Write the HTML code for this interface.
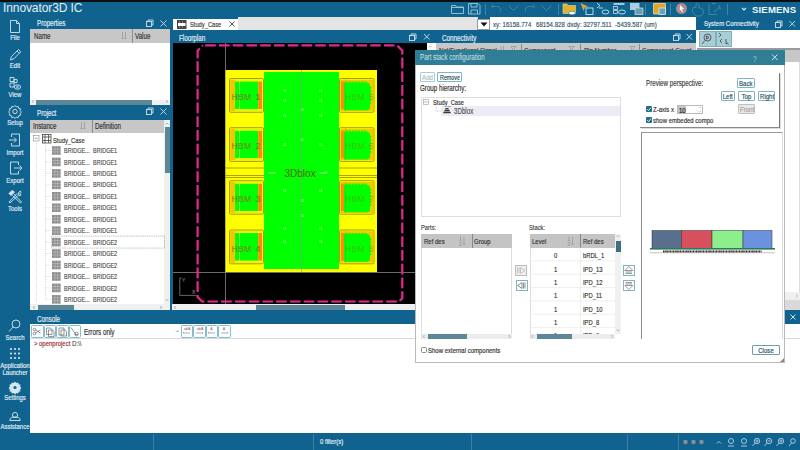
<!DOCTYPE html>
<html><head><meta charset="utf-8">
<style>
*{margin:0;padding:0;box-sizing:border-box}
html,body{width:800px;height:450px;overflow:hidden;background:#fff;font-family:"Liberation Sans",sans-serif;font-size:6px;color:#333}
.a{position:absolute}
.tl{background:#10638f}
.t{position:absolute;white-space:nowrap;line-height:1;-webkit-text-stroke:0.18px currentColor}
.w{color:#e2eef4}
.nx{-webkit-text-stroke:0 !important}
svg{position:absolute;overflow:visible}
.gh{position:absolute;background:#c7c7c7}
.btn{position:absolute;border:0.8px solid #86bccb;background:#fafdfe;border-radius:1.5px}
</style></head><body>

<!-- top bar -->
<div class="a" style="left:0;top:0;width:800px;height:2px;background:#0b0f12"></div>
<div class="a tl" style="left:0;top:1.5px;width:800px;height:15.5px"></div>
<div class="t nx" style="left:3px;top:2px;font-size:12px;color:#e4eff5;letter-spacing:-0.1px">Innovator3D IC</div>
<!-- toolbar icons -->
<svg style="left:0;top:0" width="800" height="17" viewBox="0 0 800 17">
 <g fill="none" stroke="#9cc8dc" stroke-width="0.9">
  <path d="M451.5 5.5h4l1 1.5h7v6.5h-12z M451.5 7.5h12"/>
  <path d="M468.5 3.5h9.5l2 2v8.5h-11.5z M471 3.5v3.5h6v-3.5 M471 14v-4h6.5v4"/>
 </g>
 <g fill="none" stroke="#4d87a3" stroke-width="0.9">
  <path d="M485.5 4v11 M558.5 4v11 M645.5 4v11 M670.5 4v11 M727.5 4v11"/>
  <path d="M500 12.5c1.5-3 0-6-3.5-6h-4 M493.5 4.5l-2 2 2 2"/>
  <path d="M508.5 5.5l5 5 5-5"/>
  <path d="M526 12.5c-1.5-3 0-6 3.5-6h4 M533 4.5l2 2-2 2"/>
  <path d="M541.5 5.5l5 5 5-5"/>
  <path d="M693 13c-1-2-1-5 1-6l2 1v-4c1-1 3 0 3 1v3l2 0c2 1 3 3 2 6l-2 2h-5z"/>
  <path d="M709 3.5v11h8 M712 3.5h4 M719 5v3 M714 12l6-5v3"/>
 </g>
 <path d="M563 4h4l1 1.5h7.5v8h-12.5z" fill="#e3b232" stroke="#f2d77a" stroke-width="0.6"/>
 <ellipse cx="572" cy="13" rx="3.2" ry="1.8" fill="#fff" stroke="#10638f" stroke-width="0.5"/>
 <path d="M580.5 3l3 8 1.2-3.2 3.3-1.2z" fill="#d9a43a"/>
 <rect x="586" y="8" width="7" height="6.5" fill="none" stroke="#cfe2ec" stroke-width="0.9"/>
 <path d="M597 3l3 2.5-3 2.5 M599 8h4" fill="none" stroke="#cfe2ec" stroke-width="0.9"/>
 <ellipse cx="605.5" cy="12" rx="3.5" ry="2" fill="none" stroke="#cfe2ec" stroke-width="0.9"/>
 <path d="M613.5 3h11v2h-11z" fill="#9ec6d6"/>
 <path d="M613.5 6.5h4v3h-4z M613.5 10.5h4v3h-4z" fill="none" stroke="#cfe2ec" stroke-width="0.8"/>
 <ellipse cx="622" cy="12" rx="3.5" ry="2" fill="none" stroke="#cfe2ec" stroke-width="0.9"/>
 <rect x="630" y="3" width="9.5" height="7" fill="#a8cfe0"/>
 <rect x="635" y="8" width="8" height="6.5" fill="#6d9cb0" stroke="#cfe2ec" stroke-width="0.7"/>
 <path d="M653.5 3.5h12v10.5h-12z" fill="#e3a52a" stroke="#f5e6b0" stroke-width="0.7"/>
 <rect x="659" y="8" width="6.5" height="6.5" fill="#6aa2c0" stroke="#e6f0f5" stroke-width="0.7"/>
 <circle cx="681.5" cy="8.5" r="5.5" fill="#a88c90"/>
 <path d="M680 5l4 4-2 .3 1 2.5-1 .4-1-2.5-1.3 1.3z" fill="#fff"/>
 <path d="M742 8l2 2 2-2" fill="none" stroke="#d9ecf5" stroke-width="1.1"/>
</svg>
<div class="t nx" style="left:752px;top:4.5px;font-size:9.6px;font-weight:bold;color:#f2f7fa;letter-spacing:0.15px">SIEMENS</div>

<!-- left sidebar -->
<div class="a tl" style="left:0;top:17px;width:30px;height:433px"></div>
<svg style="left:0;top:0" width="30" height="440" viewBox="0 0 30 440">
 <g fill="none" stroke="#d4e6ee" stroke-width="0.9" stroke-linejoin="round">
  <path d="M10.5 20.5h6l3 3v9h-9z M16.5 20.5v3h3"/>
  <path d="M10.5 60l1-3.5 7-7 2.3 2.3-7 7z M17 51l2.3 2.3"/>
  <path d="M10 77.5h4v4h-4z M10 83h4v4h-4z M14 79.5h3v3h-3z"/>
  <ellipse cx="17.5" cy="87" rx="3.2" ry="2.2"/><circle cx="17.5" cy="87" r="0.9"/>
  <circle cx="15" cy="111.5" r="2.2"/>
  <path d="M15 105.5l1.3 1.4 1.9-.5.5 1.9 1.9.5-.5 1.9 1.4 1.3-1.4 1.3.5 1.9-1.9.5-.5 1.9-1.9-.5-1.3 1.4-1.3-1.4-1.9.5-.5-1.9-1.9-.5.5-1.9-1.4-1.3 1.4-1.3-.5-1.9 1.9-.5.5-1.9 1.9.5z"/>
  <path d="M11.5 137v-3h8v12h-8v-3 M9 140h7 M14 137.5l2.5 2.5-2.5 2.5"/>
  <path d="M18.5 165v-3h-8v12h8v-3 M14 168h8 M19.5 165.5l2.5 2.5-2.5 2.5"/>
  <path d="M12.5 195.5l8 7.5 1-1-7.5-8 M18.5 195l-8.5 8-1-1 8-8.5"/><path d="M9 193.5l3-3 2.5 1.5-3.5 3.5z" fill="#d4e6ee"/><path d="M18 194.5l1-2.5 1.5-1 .5 1.5-1.5 1.5 1.5.5-1 1.5z"/>
  <circle cx="16" cy="324" r="4"/><path d="M13 327l-4 4.5"/>
  <circle cx="15" cy="415" r="2.6"/><path d="M9.8 420.5c0-3 2.3-3.5 5.2-3.5s5.2.5 5.2 3.5z"/>
 </g>
 <g fill="#d4e6ee">
  <circle cx="11" cy="349" r="1.1"/><circle cx="15" cy="349" r="1.1"/><circle cx="19" cy="349" r="1.1"/>
  <circle cx="11" cy="353.5" r="1.1"/><circle cx="15" cy="353.5" r="1.1"/><circle cx="19" cy="353.5" r="1.1"/>
  <circle cx="11" cy="358" r="1.1"/><circle cx="15" cy="358" r="1.1"/><circle cx="19" cy="358" r="1.1"/>
  <path d="M15 381.5l1.3 1.4 1.9-.5.5 1.9 1.9.5-.5 1.9 1.4 1.3-1.4 1.3.5 1.9-1.9.5-.5 1.9-1.9-.5-1.3 1.4-1.3-1.4-1.9.5-.5-1.9-1.9-.5.5-1.9-1.4-1.3 1.4-1.3-.5-1.9 1.9-.5.5-1.9 1.9.5z"/>
 </g>
 <circle cx="15" cy="387.5" r="1.6" fill="#10638f"/>
</svg>
<div class="t w" style="left:-15px;width:60px;text-align:center;top:34.46px;font-size:7.92px;transform:scaleX(0.758);transform-origin:50% 0">File</div>
<div class="t w" style="left:-15px;width:60px;text-align:center;top:62.46px;font-size:7.92px;transform:scaleX(0.758);transform-origin:50% 0">Edit</div>
<div class="t w" style="left:-15px;width:60px;text-align:center;top:90.96px;font-size:7.92px;transform:scaleX(0.758);transform-origin:50% 0">View</div>
<div class="t w" style="left:-15px;width:60px;text-align:center;top:119.46px;font-size:7.92px;transform:scaleX(0.758);transform-origin:50% 0">Setup</div>
<div class="t w" style="left:-15px;width:60px;text-align:center;top:148.96px;font-size:7.92px;transform:scaleX(0.758);transform-origin:50% 0">Import</div>
<div class="t w" style="left:-15px;width:60px;text-align:center;top:177.46px;font-size:7.92px;transform:scaleX(0.758);transform-origin:50% 0">Export</div>
<div class="t w" style="left:-15px;width:60px;text-align:center;top:205.46px;font-size:7.92px;transform:scaleX(0.758);transform-origin:50% 0">Tools</div>
<div class="t w" style="left:-15px;width:60px;text-align:center;top:334.46px;font-size:7.92px;transform:scaleX(0.758);transform-origin:50% 0">Search</div>
<div class="t w" style="left:-15px;width:60px;text-align:center;top:362.46px;font-size:7.92px;transform:scaleX(0.758);transform-origin:50% 0">Application</div>
<div class="t w" style="left:-15px;width:60px;text-align:center;top:369.46px;font-size:7.92px;transform:scaleX(0.758);transform-origin:50% 0">Launcher</div>
<div class="t w" style="left:-15px;width:60px;text-align:center;top:394.46px;font-size:7.92px;transform:scaleX(0.758);transform-origin:50% 0">Settings</div>
<div class="t w" style="left:-15px;width:60px;text-align:center;top:422.96px;font-size:7.92px;transform:scaleX(0.758);transform-origin:50% 0">Assistance</div>

<!-- status bar -->
<div class="a tl" style="left:0;top:433px;width:800px;height:17px"></div>
<div class="a" style="left:153px;top:434px;width:1px;height:16px;background:#3f7f9f"></div>
<div class="a" style="left:313px;top:434px;width:1px;height:16px;background:#3f7f9f"></div>
<div class="a" style="left:471px;top:434px;width:1px;height:16px;background:#3f7f9f"></div>
<div class="a" style="left:627px;top:434px;width:1px;height:16px;background:#3f7f9f"></div>
<div class="a" style="left:678px;top:434px;width:1px;height:16px;background:#3f7f9f"></div>
<div class="t" style="left:320px;top:438.31px;font-size:7.92px;color:#e8f1f5;transform:scaleX(0.758);transform-origin:0 0">0 filter(s)</div>
<svg style="left:0;top:0" width="800" height="450" viewBox="0 0 800 450">
 <g fill="#8a8f93"><circle cx="685.5" cy="442" r="2.2"/><circle cx="693.5" cy="442" r="2.2"/><circle cx="701.5" cy="442" r="2.2"/></g>
 <g fill="none" stroke="#c9dfe9" stroke-width="0.8">
  <path d="M717 443.5l2-2 2 2"/>
  <circle cx="731" cy="441" r="2.5"/><path d="M728 446h6"/>
  <circle cx="744" cy="441" r="2.5"/><path d="M741 446h6"/>
  <circle cx="757" cy="441" r="2.7"/><path d="M755 443l-2.5 3 M755.5 441h3 M757 439.5v3"/>
  <circle cx="769" cy="441" r="2.7"/><path d="M767 443l-2.5 3 M767.5 441h3"/>
  <circle cx="781" cy="441" r="2.7"/><path d="M779 443l-2.5 3 M779.5 441h3 M781 439.5v3"/>
  <circle cx="793" cy="441" r="2.3"/><path d="M791.5 443l-2.5 3"/>
 </g>
</svg>

<div class="a tl" style="left:30px;top:17px;width:142px;height:12px"></div>
<div class="t w" style="left:37px;top:20.28px;font-size:8.18px;transform:scaleX(0.758);transform-origin:0 0">Properties</div>
<div class="gh" style="left:30px;top:29px;width:140px;height:14px"></div>
<div class="t" style="left:33.5px;top:33.28px;font-size:8.18px;color:#333;transform:scaleX(0.758);transform-origin:0 0">Name</div>
<div class="a" style="left:132px;top:29px;width:1px;height:14px;background:#8e8e8e"></div>
<div class="t" style="left:135px;top:33.28px;font-size:8.18px;color:#333;transform:scaleX(0.758);transform-origin:0 0">Value</div>
<svg style="left:0;top:0" width="200" height="200" viewBox="0 0 200 200"><g fill="none" stroke="#8a8a8a" stroke-width="0.6"><path d="M122.5 32v7 M121.5 38l1 1 1-1 M125.5 32v7 M124.5 38l1 1 1-1"/></g></svg>
<div class="a" style="left:30px;top:43px;width:140px;height:61.5px;background:#fff"></div>
<div class="a" style="left:30px;top:99.5px;width:140px;height:5px;background:#f0f0f0"></div>
<div class="a" style="left:36px;top:99.5px;width:116px;height:5px;background:#5b8796"></div>
<div class="t" style="left:32px;top:99.47px;font-size:6.60px;color:#999;transform:scaleX(0.758);transform-origin:0 0">&lsaquo;</div>
<div class="t" style="left:166px;top:99.47px;font-size:6.60px;color:#999;transform:scaleX(0.758);transform-origin:0 0">&rsaquo;</div>
<div class="a tl" style="left:30px;top:104.5px;width:142px;height:15px"></div>
<div class="t w" style="left:37px;top:109.78px;font-size:8.18px;transform:scaleX(0.758);transform-origin:0 0">Project</div>
<div class="gh" style="left:30px;top:119.5px;width:134px;height:13px"></div>
<div class="t" style="left:33px;top:123.28px;font-size:8.18px;color:#333;transform:scaleX(0.758);transform-origin:0 0">Instance</div>
<svg style="left:0;top:0" width="200" height="200" viewBox="0 0 200 200"><g fill="none" stroke="#8a8a8a" stroke-width="0.6"><path d="M81.5 122v7 M80.5 128l1 1 1-1 M84.5 122v7 M83.5 128l1 1 1-1"/></g></svg>
<div class="a" style="left:92px;top:119.5px;width:1px;height:13px;background:#8e8e8e"></div>
<div class="t" style="left:94.5px;top:123.28px;font-size:8.18px;color:#333;transform:scaleX(0.758);transform-origin:0 0">Definition</div>
<div class="a" style="left:30px;top:132.5px;width:134px;height:171.5px;background:#fff"></div>
<div class="a" style="left:164px;top:119.5px;width:6px;height:184.5px;background:#f0f0f0"></div>
<div class="a" style="left:164.5px;top:127px;width:5px;height:46px;background:#5b8796"></div>
<svg style="left:0;top:0" width="200" height="320" viewBox="0 0 200 320"><g fill="none" stroke="#888" stroke-width="0.6"><path d="M165.5 124.5l1.5-1.5 1.5 1.5 M165.5 299l1.5 1.5 1.5-1.5"/></g></svg>
<div class="a" style="left:30px;top:304px;width:140px;height:6px;background:#f0f0f0"></div>
<div class="a" style="left:38px;top:304.5px;width:36px;height:5px;background:#5b8796"></div>
<div class="t" style="left:32.5px;top:303.89px;font-size:7.26px;color:#999;transform:scaleX(0.758);transform-origin:0 0">&lsaquo;</div>
<div class="t" style="left:160px;top:303.89px;font-size:7.26px;color:#999;transform:scaleX(0.758);transform-origin:0 0">&rsaquo;</div>
<svg style="left:0;top:0" width="200" height="320" viewBox="0 0 200 320"><rect x="33.5" y="135.5" width="5.5" height="5.5" fill="#fff" stroke="#8a8a8a" stroke-width="0.6"/><path d="M34.8 138.25h3" stroke="#666" stroke-width="0.6"/><rect x="42.5" y="134.5" width="8.5" height="8.5" fill="#fff" stroke="#444" stroke-width="0.8"/><path d="M42.5 137h8.5 M42.5 140.5h8.5 M45 134.5v8.5 M48.5 134.5v8.5" stroke="#444" stroke-width="0.8"/><path d="M36.5 143v159" stroke="#b8c4c8" stroke-width="0.6" stroke-dasharray="1 1"/></svg>
<div class="t" style="left:53px;top:136.64px;font-size:7.66px;color:#333;transform:scaleX(0.758);transform-origin:0 0">Study_Case</div>
<svg style="left:0;top:0" width="200" height="320" viewBox="0 0 200 320"><path d="M45.5 150.50h5" stroke="#b8c4c8" stroke-width="0.6" stroke-dasharray="1 1"/><rect x="52" y="146.20" width="8.6" height="8.6" fill="#8c8c8c"/><path d="M52 149.10h8.6 M52 151.90h8.6 M54.9 146.20v8.6 M57.7 146.20v8.6" stroke="#cfcfcf" stroke-width="0.5"/><path d="M45.5 161.95h5" stroke="#b8c4c8" stroke-width="0.6" stroke-dasharray="1 1"/><rect x="52" y="157.65" width="8.6" height="8.6" fill="#8c8c8c"/><path d="M52 160.55h8.6 M52 163.35h8.6 M54.9 157.65v8.6 M57.7 157.65v8.6" stroke="#cfcfcf" stroke-width="0.5"/><path d="M45.5 173.40h5" stroke="#b8c4c8" stroke-width="0.6" stroke-dasharray="1 1"/><rect x="52" y="169.10" width="8.6" height="8.6" fill="#8c8c8c"/><path d="M52 172.00h8.6 M52 174.80h8.6 M54.9 169.10v8.6 M57.7 169.10v8.6" stroke="#cfcfcf" stroke-width="0.5"/><path d="M45.5 184.85h5" stroke="#b8c4c8" stroke-width="0.6" stroke-dasharray="1 1"/><rect x="52" y="180.55" width="8.6" height="8.6" fill="#8c8c8c"/><path d="M52 183.45h8.6 M52 186.25h8.6 M54.9 180.55v8.6 M57.7 180.55v8.6" stroke="#cfcfcf" stroke-width="0.5"/><path d="M45.5 196.30h5" stroke="#b8c4c8" stroke-width="0.6" stroke-dasharray="1 1"/><rect x="52" y="192.00" width="8.6" height="8.6" fill="#8c8c8c"/><path d="M52 194.90h8.6 M52 197.70h8.6 M54.9 192.00v8.6 M57.7 192.00v8.6" stroke="#cfcfcf" stroke-width="0.5"/><path d="M45.5 207.75h5" stroke="#b8c4c8" stroke-width="0.6" stroke-dasharray="1 1"/><rect x="52" y="203.45" width="8.6" height="8.6" fill="#8c8c8c"/><path d="M52 206.35h8.6 M52 209.15h8.6 M54.9 203.45v8.6 M57.7 203.45v8.6" stroke="#cfcfcf" stroke-width="0.5"/><path d="M45.5 219.20h5" stroke="#b8c4c8" stroke-width="0.6" stroke-dasharray="1 1"/><rect x="52" y="214.90" width="8.6" height="8.6" fill="#8c8c8c"/><path d="M52 217.80h8.6 M52 220.60h8.6 M54.9 214.90v8.6 M57.7 214.90v8.6" stroke="#cfcfcf" stroke-width="0.5"/><path d="M45.5 230.65h5" stroke="#b8c4c8" stroke-width="0.6" stroke-dasharray="1 1"/><rect x="52" y="226.35" width="8.6" height="8.6" fill="#8c8c8c"/><path d="M52 229.25h8.6 M52 232.05h8.6 M54.9 226.35v8.6 M57.7 226.35v8.6" stroke="#cfcfcf" stroke-width="0.5"/><path d="M45.5 242.10h5" stroke="#b8c4c8" stroke-width="0.6" stroke-dasharray="1 1"/><rect x="52" y="237.80" width="8.6" height="8.6" fill="#8c8c8c"/><path d="M52 240.70h8.6 M52 243.50h8.6 M54.9 237.80v8.6 M57.7 237.80v8.6" stroke="#cfcfcf" stroke-width="0.5"/><path d="M45.5 253.55h5" stroke="#b8c4c8" stroke-width="0.6" stroke-dasharray="1 1"/><rect x="52" y="249.25" width="8.6" height="8.6" fill="#8c8c8c"/><path d="M52 252.15h8.6 M52 254.95h8.6 M54.9 249.25v8.6 M57.7 249.25v8.6" stroke="#cfcfcf" stroke-width="0.5"/><path d="M45.5 265.00h5" stroke="#b8c4c8" stroke-width="0.6" stroke-dasharray="1 1"/><rect x="52" y="260.70" width="8.6" height="8.6" fill="#8c8c8c"/><path d="M52 263.60h8.6 M52 266.40h8.6 M54.9 260.70v8.6 M57.7 260.70v8.6" stroke="#cfcfcf" stroke-width="0.5"/><path d="M45.5 276.45h5" stroke="#b8c4c8" stroke-width="0.6" stroke-dasharray="1 1"/><rect x="52" y="272.15" width="8.6" height="8.6" fill="#8c8c8c"/><path d="M52 275.05h8.6 M52 277.85h8.6 M54.9 272.15v8.6 M57.7 272.15v8.6" stroke="#cfcfcf" stroke-width="0.5"/><path d="M45.5 287.90h5" stroke="#b8c4c8" stroke-width="0.6" stroke-dasharray="1 1"/><rect x="52" y="283.60" width="8.6" height="8.6" fill="#8c8c8c"/><path d="M52 286.50h8.6 M52 289.30h8.6 M54.9 283.60v8.6 M57.7 283.60v8.6" stroke="#cfcfcf" stroke-width="0.5"/><path d="M45.5 299.35h5" stroke="#b8c4c8" stroke-width="0.6" stroke-dasharray="1 1"/><rect x="52" y="295.05" width="8.6" height="8.6" fill="#8c8c8c"/><path d="M52 297.95h8.6 M52 300.75h8.6 M54.9 295.05v8.6 M57.7 295.05v8.6" stroke="#cfcfcf" stroke-width="0.5"/><path d="M45.5 143v157" stroke="#b8c4c8" stroke-width="0.6" stroke-dasharray="1 1"/><rect x="51.5" y="236.10" width="113" height="12" fill="none" stroke="#777" stroke-width="0.5" stroke-dasharray="1 0.8"/></svg>
<div class="t" style="left:63.5px;top:147.10px;font-size:7.19px;color:#505050;letter-spacing:0.05px;transform:scaleX(0.758);transform-origin:0 0">BRIDGE...</div>
<div class="t" style="left:93px;top:147.10px;font-size:7.19px;color:#505050;letter-spacing:0.05px;transform:scaleX(0.758);transform-origin:0 0">BRIDGE1</div>
<div class="t" style="left:63.5px;top:158.55px;font-size:7.19px;color:#505050;letter-spacing:0.05px;transform:scaleX(0.758);transform-origin:0 0">BRIDGE...</div>
<div class="t" style="left:93px;top:158.55px;font-size:7.19px;color:#505050;letter-spacing:0.05px;transform:scaleX(0.758);transform-origin:0 0">BRIDGE1</div>
<div class="t" style="left:63.5px;top:170.00px;font-size:7.19px;color:#505050;letter-spacing:0.05px;transform:scaleX(0.758);transform-origin:0 0">BRIDGE...</div>
<div class="t" style="left:93px;top:170.00px;font-size:7.19px;color:#505050;letter-spacing:0.05px;transform:scaleX(0.758);transform-origin:0 0">BRIDGE1</div>
<div class="t" style="left:63.5px;top:181.45px;font-size:7.19px;color:#505050;letter-spacing:0.05px;transform:scaleX(0.758);transform-origin:0 0">BRIDGE...</div>
<div class="t" style="left:93px;top:181.45px;font-size:7.19px;color:#505050;letter-spacing:0.05px;transform:scaleX(0.758);transform-origin:0 0">BRIDGE1</div>
<div class="t" style="left:63.5px;top:192.90px;font-size:7.19px;color:#505050;letter-spacing:0.05px;transform:scaleX(0.758);transform-origin:0 0">BRIDGE...</div>
<div class="t" style="left:93px;top:192.90px;font-size:7.19px;color:#505050;letter-spacing:0.05px;transform:scaleX(0.758);transform-origin:0 0">BRIDGE1</div>
<div class="t" style="left:63.5px;top:204.35px;font-size:7.19px;color:#505050;letter-spacing:0.05px;transform:scaleX(0.758);transform-origin:0 0">BRIDGE...</div>
<div class="t" style="left:93px;top:204.35px;font-size:7.19px;color:#505050;letter-spacing:0.05px;transform:scaleX(0.758);transform-origin:0 0">BRIDGE1</div>
<div class="t" style="left:63.5px;top:215.80px;font-size:7.19px;color:#505050;letter-spacing:0.05px;transform:scaleX(0.758);transform-origin:0 0">BRIDGE...</div>
<div class="t" style="left:93px;top:215.80px;font-size:7.19px;color:#505050;letter-spacing:0.05px;transform:scaleX(0.758);transform-origin:0 0">BRIDGE1</div>
<div class="t" style="left:63.5px;top:227.25px;font-size:7.19px;color:#505050;letter-spacing:0.05px;transform:scaleX(0.758);transform-origin:0 0">BRIDGE...</div>
<div class="t" style="left:93px;top:227.25px;font-size:7.19px;color:#505050;letter-spacing:0.05px;transform:scaleX(0.758);transform-origin:0 0">BRIDGE1</div>
<div class="t" style="left:63.5px;top:238.70px;font-size:7.19px;color:#505050;letter-spacing:0.05px;transform:scaleX(0.758);transform-origin:0 0">BRIDGE...</div>
<div class="t" style="left:93px;top:238.70px;font-size:7.19px;color:#505050;letter-spacing:0.05px;transform:scaleX(0.758);transform-origin:0 0">BRIDGE2</div>
<div class="t" style="left:63.5px;top:250.15px;font-size:7.19px;color:#505050;letter-spacing:0.05px;transform:scaleX(0.758);transform-origin:0 0">BRIDGE...</div>
<div class="t" style="left:93px;top:250.15px;font-size:7.19px;color:#505050;letter-spacing:0.05px;transform:scaleX(0.758);transform-origin:0 0">BRIDGE2</div>
<div class="t" style="left:63.5px;top:261.60px;font-size:7.19px;color:#505050;letter-spacing:0.05px;transform:scaleX(0.758);transform-origin:0 0">BRIDGE...</div>
<div class="t" style="left:93px;top:261.60px;font-size:7.19px;color:#505050;letter-spacing:0.05px;transform:scaleX(0.758);transform-origin:0 0">BRIDGE2</div>
<div class="t" style="left:63.5px;top:273.05px;font-size:7.19px;color:#505050;letter-spacing:0.05px;transform:scaleX(0.758);transform-origin:0 0">BRIDGE...</div>
<div class="t" style="left:93px;top:273.05px;font-size:7.19px;color:#505050;letter-spacing:0.05px;transform:scaleX(0.758);transform-origin:0 0">BRIDGE2</div>
<div class="t" style="left:63.5px;top:284.50px;font-size:7.19px;color:#505050;letter-spacing:0.05px;transform:scaleX(0.758);transform-origin:0 0">BRIDGE...</div>
<div class="t" style="left:93px;top:284.50px;font-size:7.19px;color:#505050;letter-spacing:0.05px;transform:scaleX(0.758);transform-origin:0 0">BRIDGE2</div>
<div class="t" style="left:63.5px;top:295.95px;font-size:7.19px;color:#505050;letter-spacing:0.05px;transform:scaleX(0.758);transform-origin:0 0">BRIDGE...</div>
<div class="t" style="left:93px;top:295.95px;font-size:7.19px;color:#505050;letter-spacing:0.05px;transform:scaleX(0.758);transform-origin:0 0">BRIDGE2</div>
<svg style="left:0;top:0" width="200" height="130" viewBox="0 0 200 130">
<g fill="none" stroke="#cfe3ec" stroke-width="0.9">
<rect x="146.5" y="21.5" width="5" height="5"/><path d="M148 21.5v-1.5h5v5h-1.5"/>
<path d="M160.5 20.5l6 6 M166.5 20.5l-6 6"/>
<rect x="146.5" y="109.5" width="5" height="5"/><path d="M148 109.5v-1.5h5v5h-1.5"/>
<path d="M160.5 108.5l6 6 M166.5 108.5l-6 6"/>
</g></svg>
<div class="a tl" style="left:170px;top:17px;width:526px;height:13px"></div>
<div class="a" style="left:238px;top:17px;width:240px;height:13px;background:#e4e4e4"></div>
<div class="a" style="left:172.5px;top:19px;width:65.5px;height:11px;background:#fff"></div>
<div class="a" style="left:477px;top:18.5px;width:13px;height:11.5px;background:#fff;border:1px solid #9a9a9a"></div>
<div class="a" style="left:490px;top:17px;width:206px;height:13px;background:#fff"></div>
<svg style="left:0;top:0" width="800" height="40" viewBox="0 0 800 40"><path d="M480.5 22.5h7l-3.5 4z" fill="#111"/><rect x="177.5" y="20.5" width="8.5" height="8" fill="none" stroke="#444" stroke-width="1"/><path d="M177.5 22h8.5 M177.5 27h8.5" stroke="#444" stroke-width="2"/><path d="M179 22h1 M182 22h1 M179 27h1 M182 27h1" stroke="#ccc" stroke-width="0.8"/><path d="M229.5 21.5l5 5 M234.5 21.5l-5 5" stroke="#444" stroke-width="0.9"/></svg>
<div class="t" style="left:190px;top:20.95px;font-size:7.59px;color:#3a3a3a;transform:scaleX(0.758);transform-origin:0 0">Study_Case</div>
<div class="t" style="left:493px;top:21.30px;font-size:8.05px;color:#34566a;transform:scaleX(0.758);transform-origin:0 0">xy: 16158.774</div>
<div class="t" style="left:536px;top:21.30px;font-size:8.05px;color:#34566a;transform:scaleX(0.758);transform-origin:0 0">68154.828</div>
<div class="t" style="left:567px;top:21.30px;font-size:8.05px;color:#34566a;transform:scaleX(0.758);transform-origin:0 0">dxdy: 32797.511</div>
<div class="t" style="left:615px;top:21.30px;font-size:8.05px;color:#34566a;transform:scaleX(0.758);transform-origin:0 0">-5439.587 (um)</div>
<div class="a tl" style="left:170px;top:30px;width:265px;height:13px"></div>
<div class="t w" style="left:179px;top:34.27px;font-size:8.32px;transform:scaleX(0.758);transform-origin:0 0">Floorplan</div>
<div class="a tl" style="left:170px;top:17px;width:3px;height:293px"></div>
<div class="a" style="left:173px;top:43px;width:254px;height:261px;background:#000"></div>
<div class="a" style="left:427px;top:43px;width:8px;height:261px;background:#f0f0f0"></div>
<div class="a" style="left:427px;top:43px;width:7.5px;height:7px;background:#fff"></div>
<div class="a" style="left:172px;top:304px;width:263px;height:6px;background:#efefef"></div>
<div class="a" style="left:256px;top:304.5px;width:89px;height:5px;background:#5b8796"></div>
<div class="t" style="left:174px;top:303.89px;font-size:7.26px;color:#999;transform:scaleX(0.758);transform-origin:0 0">&lsaquo;</div>
<svg style="left:0;top:0" width="440" height="310" viewBox="0 0 440 310">
<defs><clipPath id="cv"><rect x="173" y="43" width="254" height="261"/></clipPath></defs>
<g clip-path="url(#cv)">
<path d="M225.5 43v261 M173 272.5h254" stroke="#9a9a9a" stroke-width="0.7"/>
<rect x="225.5" y="70" width="151.5" height="202" fill="#ffff00"/>
<g stroke="#8a7a10" stroke-width="0.7" fill="none">
<path d="M225.5 168h151.5 M225.5 175.5h151.5 M225.5 177.5h151.5"/>
</g>
<rect x="229.5" y="78.5" width="34" height="33.8" fill="#ffff00" stroke="#8a8418" stroke-width="0.8" rx="1.2"/><rect x="230.3" y="79.7" width="4.8" height="31.4" fill="#f6c400"/><rect x="235" y="81.5" width="23.3" height="27.599999999999998" fill="#00ff00"/><path d="M239.5 81.5v27.599999999999998" stroke="#e8f870" stroke-width="0.6"/><rect x="258.3" y="81.5" width="3.8" height="27.599999999999998" fill="#ff8a10"/><path d="M230.5 80.1h32 M230.5 110.7h32" stroke="#d8d020" stroke-width="0.5"/><rect x="339.5" y="78.5" width="34.5" height="33.8" fill="#ffff00" stroke="#8a8418" stroke-width="0.8" rx="1.2"/><rect x="340.3" y="79.7" width="32.9" height="31.4" fill="#f2c800"/><rect x="341" y="81.5" width="3.4" height="27.599999999999998" fill="#ff8a10"/><path d="M344 82.5h24l2 2v23.799999999999997l-2 2h-24z" fill="#00ff00"/><path d="M346 82.1h21 M345 109.1h22 M370.5 86.5v17.799999999999997" stroke="#00ff00" stroke-width="1.4" stroke-dasharray="2.2 0.8"/><path d="M345.5 79.0v32.8" stroke="#8a8418" stroke-width="0.5" opacity="0.6"/><rect x="229.5" y="127.7" width="34" height="33.7" fill="#ffff00" stroke="#8a8418" stroke-width="0.8" rx="1.2"/><rect x="230.3" y="128.9" width="4.8" height="31.300000000000004" fill="#f6c400"/><rect x="235" y="130.7" width="23.3" height="27.500000000000004" fill="#00ff00"/><path d="M239.5 130.7v27.500000000000004" stroke="#e8f870" stroke-width="0.6"/><rect x="258.3" y="130.7" width="3.8" height="27.500000000000004" fill="#ff8a10"/><path d="M230.5 129.3h32 M230.5 159.8h32" stroke="#d8d020" stroke-width="0.5"/><rect x="339.5" y="127.7" width="34.5" height="33.7" fill="#ffff00" stroke="#8a8418" stroke-width="0.8" rx="1.2"/><rect x="340.3" y="128.9" width="32.9" height="31.300000000000004" fill="#f2c800"/><rect x="341" y="130.7" width="3.4" height="27.500000000000004" fill="#ff8a10"/><path d="M344 131.7h24l2 2v23.700000000000003l-2 2h-24z" fill="#00ff00"/><path d="M346 131.3h21 M345 158.20000000000002h22 M370.5 135.7v17.700000000000003" stroke="#00ff00" stroke-width="1.4" stroke-dasharray="2.2 0.8"/><path d="M345.5 128.2v32.7" stroke="#8a8418" stroke-width="0.5" opacity="0.6"/><rect x="229.5" y="180.7" width="34" height="33.5" fill="#ffff00" stroke="#8a8418" stroke-width="0.8" rx="1.2"/><rect x="230.3" y="181.89999999999998" width="4.8" height="31.1" fill="#f6c400"/><rect x="235" y="183.7" width="23.3" height="27.3" fill="#00ff00"/><path d="M239.5 183.7v27.3" stroke="#e8f870" stroke-width="0.6"/><rect x="258.3" y="183.7" width="3.8" height="27.3" fill="#ff8a10"/><path d="M230.5 182.29999999999998h32 M230.5 212.6h32" stroke="#d8d020" stroke-width="0.5"/><rect x="339.5" y="180.7" width="34.5" height="33.5" fill="#ffff00" stroke="#8a8418" stroke-width="0.8" rx="1.2"/><rect x="340.3" y="181.89999999999998" width="32.9" height="31.1" fill="#f2c800"/><rect x="341" y="183.7" width="3.4" height="27.3" fill="#ff8a10"/><path d="M344 184.7h24l2 2v23.5l-2 2h-24z" fill="#00ff00"/><path d="M346 184.29999999999998h21 M345 211.0h22 M370.5 188.7v17.5" stroke="#00ff00" stroke-width="1.4" stroke-dasharray="2.2 0.8"/><path d="M345.5 181.2v32.5" stroke="#8a8418" stroke-width="0.5" opacity="0.6"/><rect x="229.5" y="230" width="34" height="33.80000000000001" fill="#ffff00" stroke="#8a8418" stroke-width="0.8" rx="1.2"/><rect x="230.3" y="231.2" width="4.8" height="31.400000000000013" fill="#f6c400"/><rect x="235" y="233" width="23.3" height="27.600000000000012" fill="#00ff00"/><path d="M239.5 233v27.600000000000012" stroke="#e8f870" stroke-width="0.6"/><rect x="258.3" y="233" width="3.8" height="27.600000000000012" fill="#ff8a10"/><path d="M230.5 231.6h32 M230.5 262.2h32" stroke="#d8d020" stroke-width="0.5"/><rect x="339.5" y="230" width="34.5" height="33.80000000000001" fill="#ffff00" stroke="#8a8418" stroke-width="0.8" rx="1.2"/><rect x="340.3" y="231.2" width="32.9" height="31.400000000000013" fill="#f2c800"/><rect x="341" y="233" width="3.4" height="27.600000000000012" fill="#ff8a10"/><path d="M344 234h24l2 2v23.80000000000001l-2 2h-24z" fill="#00ff00"/><path d="M346 233.6h21 M345 260.6h22 M370.5 238v17.80000000000001" stroke="#00ff00" stroke-width="1.4" stroke-dasharray="2.2 0.8"/><path d="M345.5 230.5v32.80000000000001" stroke="#8a8418" stroke-width="0.5" opacity="0.6"/><rect x="264" y="72" width="75" height="197" fill="#00ff00"/><path d="M301.5 70v202" stroke="#7fa07f" stroke-width="0.6"/><path d="M203 45.3H397L402.3 50.6V298.2L399 301.5H202L197.6 297.1V50.7z" fill="none" stroke="#e4288e" stroke-width="2.2" stroke-dasharray="10.6 3.15" stroke-dashoffset="11.55"/><path d="M179.8 278v17.4h16.5 M179.8 278h1.5" fill="none" stroke="#aaa" stroke-width="0.6"/></g></svg>
<div class="t nx" style="left:231.5px;top:93.1px;font-size:8.6px;color:#74801c;letter-spacing:0.3px">HBM<span style="margin-left:4px">1</span></div>
<div class="t nx" style="left:231.5px;top:142.2px;font-size:8.6px;color:#74801c;letter-spacing:0.3px">HBM<span style="margin-left:4px">2</span></div>
<div class="t nx" style="left:231.5px;top:195.1px;font-size:8.6px;color:#74801c;letter-spacing:0.3px">HBM<span style="margin-left:4px">3</span></div>
<div class="t nx" style="left:231.5px;top:244.6px;font-size:8.6px;color:#74801c;letter-spacing:0.3px">HBM<span style="margin-left:4px">4</span></div>
<div class="t nx" style="left:345px;top:93.1px;font-size:8.6px;color:#74801c;opacity:0.45;letter-spacing:0.3px">HBM<span style="margin-left:4px">5</span></div>
<div class="t nx" style="left:345px;top:142.2px;font-size:8.6px;color:#74801c;opacity:0.45;letter-spacing:0.3px">HBM<span style="margin-left:4px">6</span></div>
<div class="t nx" style="left:345px;top:195.1px;font-size:8.6px;color:#74801c;opacity:0.45;letter-spacing:0.3px">HBM<span style="margin-left:4px">7</span></div>
<div class="t nx" style="left:345px;top:244.6px;font-size:8.6px;color:#74801c;opacity:0.45;letter-spacing:0.3px">HBM<span style="margin-left:4px">8</span></div>
<div class="t nx" style="left:284.5px;top:169px;font-size:10px;color:#5a6418">3Dblox</div>
<div class="t nx" style="left:268px;top:172px;font-size:3.5px;color:#d8f8d0">ovrxc</div>
<div class="t nx" style="left:318px;top:172px;font-size:3.5px;color:#d8f8d0">.uvdiff</div>
<div class="t nx" style="left:283px;top:89px;font-size:4px;color:#c8f8c8">l1</div>
<div class="t nx" style="left:283px;top:99px;font-size:4px;color:#c8f8c8">l1</div>
<div class="t nx" style="left:319px;top:89px;font-size:4px;color:#c8f8c8">l1</div>
<div class="t nx" style="left:319px;top:99px;font-size:4px;color:#c8f8c8">l1</div>
<div class="t nx" style="left:301px;top:108px;font-size:4px;color:#c8f8c8">l1</div>
<div class="t nx" style="left:283px;top:114px;font-size:4px;color:#c8f8c8">l1</div>
<div class="t nx" style="left:319px;top:114px;font-size:4px;color:#c8f8c8">l1</div>
<div class="t nx" style="left:301px;top:138px;font-size:4px;color:#c8f8c8">l1</div>
<div class="t nx" style="left:283px;top:143px;font-size:4px;color:#c8f8c8">l1</div>
<div class="t nx" style="left:319px;top:143px;font-size:4px;color:#c8f8c8">l1</div>
<div class="t nx" style="left:283px;top:189px;font-size:4px;color:#c8f8c8">l1</div>
<div class="t nx" style="left:319px;top:189px;font-size:4px;color:#c8f8c8">l1</div>
<div class="t nx" style="left:301px;top:199px;font-size:4px;color:#c8f8c8">l1</div>
<div class="t nx" style="left:301px;top:214px;font-size:4px;color:#c8f8c8">l1</div>
<div class="t nx" style="left:283px;top:227px;font-size:4px;color:#c8f8c8">l1</div>
<div class="t nx" style="left:319px;top:227px;font-size:4px;color:#c8f8c8">l1</div>
<div class="t nx" style="left:283px;top:240px;font-size:4px;color:#c8f8c8">l1</div>
<div class="t nx" style="left:319px;top:240px;font-size:4px;color:#c8f8c8">l1</div>
<div class="t nx" style="left:182px;top:277.5px;font-size:5px;color:#aaa">Y</div>
<div class="t nx" style="left:192px;top:289.5px;font-size:5px;color:#aaa">X</div>
<svg style="left:0;top:0" width="440" height="60" viewBox="0 0 440 60"><g fill="none" stroke="#cfe3ec" stroke-width="0.9"><rect x="409.5" y="35.5" width="5" height="5"/><path d="M411 35.5v-1.5h5v5h-1.5"/><path d="M424 34l5.5 5.5 M429.5 34l-5.5 5.5"/></g><path d="M429 47.5l1.5-1.5 1.5 1.5" fill="none" stroke="#888" stroke-width="0.6"/></svg>
<div class="a tl" style="left:435px;top:30px;width:261px;height:13px"></div>
<div class="t w" style="left:442px;top:34.27px;font-size:8.32px;transform:scaleX(0.758);transform-origin:0 0">Connectivity</div>
<div class="gh" style="left:435.5px;top:43px;width:260.5px;height:14px"></div>
<div class="t" style="left:439px;top:46.80px;font-size:8.05px;color:#333;transform:scaleX(0.758);transform-origin:0 0">Net/Functional Signal</div>
<div class="t" style="left:524px;top:46.80px;font-size:8.05px;color:#333;transform:scaleX(0.758);transform-origin:0 0">Component</div>
<div class="t" style="left:584px;top:46.80px;font-size:8.05px;color:#333;transform:scaleX(0.758);transform-origin:0 0">Pin Number</div>
<div class="t" style="left:642px;top:46.80px;font-size:8.05px;color:#333;transform:scaleX(0.758);transform-origin:0 0">Component Count</div>
<div class="a" style="left:435.5px;top:57px;width:260.5px;height:253px;background:#fff"></div>
<div class="a" style="left:521px;top:44px;width:0.8px;height:13px;background:#8a8a8a"></div>
<div class="a" style="left:580px;top:44px;width:0.8px;height:13px;background:#8a8a8a"></div>
<div class="a" style="left:639px;top:44px;width:0.8px;height:13px;background:#8a8a8a"></div>
<svg style="left:0;top:0" width="800" height="60" viewBox="0 0 800 60"><g fill="none" stroke="#8a8a8a" stroke-width="0.6"><path d="M501 46v5 M503.5 46v5 M502.5 50l1 1 1-1"/><path d="M511 46.5h5l-1.5 2v2h-2v-2z M569 46.5h5l-1.5 2v2h-2v-2z M630 46.5h5l-1.5 2v2h-2v-2z"/></g></svg>
<svg style="left:0;top:0" width="800" height="60" viewBox="0 0 800 60"><g fill="none" stroke="#cfe3ec" stroke-width="0.9"><rect x="673.5" y="35.5" width="5" height="5"/><path d="M675 35.5v-1.5h5v5h-1.5"/><path d="M686.5 34l5.5 5.5 M692 34l-5.5 5.5"/></g></svg>
<div class="a tl" style="left:696px;top:17px;width:104px;height:13px"></div>
<div class="t w" style="left:704px;top:20.10px;font-size:7.99px;transform:scaleX(0.758);transform-origin:0 0">System Connectivity</div>
<div class="a" style="left:697px;top:30px;width:103px;height:18px;background:#fff"></div>
<div class="a" style="left:699px;top:30.5px;width:16.5px;height:16px;background:#a9cdd6;border:1px solid #7fb0bd"></div>
<div class="a" style="left:715.5px;top:30.5px;width:16.5px;height:16px;background:#a9cdd6;border:1px solid #7fb0bd"></div>
<div class="a" style="left:697px;top:48px;width:103px;height:1.5px;background:#9a9a9a"></div>
<div class="gh" style="left:697px;top:49.5px;width:103px;height:12px"></div>
<div class="a" style="left:697px;top:61.5px;width:103px;height:248.5px;background:#fff"></div>
<div class="a" style="left:798.5px;top:61.5px;width:1px;height:234px;background:#ddd"></div>
<div class="a" style="left:785px;top:292px;width:15px;height:8px;background:#efefef"></div>
<div class="a" style="left:785px;top:300px;width:15px;height:10px;background:#d9d9d9"></div>
<svg style="left:0;top:0" width="800" height="320" viewBox="0 0 800 320"><g fill="none" stroke="#cfe3ec" stroke-width="0.9"><rect x="775.5" y="22.5" width="5" height="5"/><path d="M777 22.5v-1.5h5v5h-1.5"/><path d="M789.5 21l5.5 5.5 M795 21l-5.5 5.5"/></g><g fill="none" stroke="#3d3d3d" stroke-width="0.8"><circle cx="707.5" cy="37.5" r="3.5"/><path d="M705 40.5l-3 3.5 M706.5 36l2.5 1.5-2.5 1.5z"/><path d="M719 33l2 2-2 2 M722 39l-2 2 2 2 M726 39v5l1.2-1 1.3 1.5"/></g><path d="M796 294.5l1.5 1.5-1.5 1.5" fill="none" stroke="#999" stroke-width="0.6"/></svg>
<div class="a tl" style="left:30px;top:310px;width:770px;height:14px"></div>
<div class="t w" style="left:37px;top:315.27px;font-size:8.32px;transform:scaleX(0.758);transform-origin:0 0">Console</div>
<div class="a" style="left:30px;top:324px;width:770px;height:109px;background:#fff"></div>
<div class="a" style="left:30px;top:337.5px;width:770px;height:0.6px;background:#d9d9d9"></div>
<div class="btn" style="left:31px;top:325px;width:12.5px;height:12.5px"></div>
<div class="btn" style="left:43.5px;top:325px;width:12.5px;height:12.5px"></div>
<div class="btn" style="left:56px;top:325px;width:12.5px;height:12.5px"></div>
<div class="btn" style="left:68.5px;top:325px;width:12.5px;height:12.5px"></div>
<div class="btn" style="left:180.5px;top:325px;width:12.5px;height:12.5px"></div>
<div class="btn" style="left:193px;top:325px;width:12.5px;height:12.5px"></div>
<div class="btn" style="left:205.5px;top:325px;width:12.5px;height:12.5px"></div>
<div class="btn" style="left:218px;top:325px;width:12.5px;height:12.5px"></div>
<svg style="left:0;top:0" width="800" height="440" viewBox="0 0 800 440"><g fill="none" stroke="#555" stroke-width="0.6"><circle cx="34.5" cy="329.5" r="1.3"/><circle cx="34.5" cy="333.5" r="1.3"/><path d="M35.5 330l5 3 M35.5 333l5-3"/><path d="M46.5 328h4l1.5 1.5v5h-5.5z M48.5 330h4l1.5 1.5v5h-5.5z"/><path d="M59 328h5v7h-5z M61 330h4l1.5 1.5v4.5h-5.5z"/><path d="M71 327.5l2 3 M73 330.5l3 4 M75 334.5h3" /><circle cx="76.5" cy="334" r="1.8"/><path d="M176 330.5l1.5 1.5 1.5-1.5"/></g><g fill="none" stroke="#666" stroke-width="0.5"><path d="M183 333h7 M183 333l1-1 M196 333h7 M203 333l-1-1 M208 333h7 M208 333l1-1 M221 333h7 M228 333l-1-1"/></g><g font-size="3" fill="#8a3a3a" font-family="Liberation Sans"><text x="184" y="330">ab/A</text><text x="197" y="330">ab/A</text><text x="210.5" y="330">A</text><text x="223" y="330">A</text></g></svg>
<div class="t" style="left:84px;top:328.27px;font-size:8.32px;color:#333;transform:scaleX(0.758);transform-origin:0 0">Errors only</div>
<div class="t" style="left:33.5px;top:339.81px;font-size:7.92px;color:#555;transform:scaleX(0.758);transform-origin:0 0">&gt;</div>
<div class="t" style="left:39px;top:339.81px;font-size:7.92px;color:#9a3030;transform:scaleX(0.758);transform-origin:0 0">openproject <span style="color:#555">D:\\</span></div>
<div class="a" style="left:785px;top:310px;width:15px;height:14px;background:#10638f"></div>
<svg style="left:0;top:0" width="800" height="440" viewBox="0 0 800 440"><path d="M790.5 314.5l5 5 M795.5 314.5l-5 5" stroke="#e8f1f5" stroke-width="0.9"/></svg>
<div class="a" style="left:415px;top:50px;width:370px;height:312.5px;background:#fff;border:0.8px solid #b8b8b8;border-top:none"></div>
<div class="a" style="left:415px;top:50px;width:370px;height:14.5px;background:#2f7e96"></div>
<div class="t" style="left:420px;top:53.88px;font-size:8.18px;color:#d2e4eb;-webkit-text-stroke:0;transform:scaleX(0.758);transform-origin:0 0">Part stack configuration</div>
<div class="t" style="left:753px;top:54.73px;font-size:8.58px;color:#8fbccc;transform:scaleX(0.758);transform-origin:0 0">?</div>
<svg style="left:0;top:0" width="800" height="370" viewBox="0 0 800 370"><path d="M772 54.5l5.5 5.5 M777.5 54.5l-5.5 5.5" stroke="#e6f1f5" stroke-width="0.9"/></svg>
<div class="a" style="left:420px;top:72px;width:15px;height:10px;background:#fff;border:0.8px solid #a8ccd6;border-radius:1px"></div>
<div class="t" style="left:420px;width:15px;text-align:center;top:74.10px;font-size:8.05px;color:#a8bcc4;transform:scaleX(0.758);transform-origin:50% 0">Add</div>
<div class="a" style="left:437px;top:72px;width:25px;height:10px;background:#fff;border:0.8px solid #7fb4c4;border-radius:1px"></div>
<div class="t" style="left:437px;width:25px;text-align:center;top:74.21px;font-size:7.06px;color:#1f4f63;transform:scaleX(0.758);transform-origin:50% 0">Remove</div>
<div class="t" style="left:420px;top:85.08px;font-size:8.18px;color:#333;transform:scaleX(0.758);transform-origin:0 0">Group hierarchy:</div>
<div class="a" style="left:420.5px;top:97px;width:200px;height:120px;border:0.8px solid #dedede"></div>
<div class="a" style="left:441px;top:106px;width:179px;height:10px;background:#ececf6"></div>
<svg style="left:0;top:0" width="800" height="370" viewBox="0 0 800 370"><rect x="423.5" y="99.5" width="5" height="5" fill="#fff" stroke="#9a9a9a" stroke-width="0.6"/><path d="M424.5 102h3" stroke="#777" stroke-width="0.6"/><path d="M436 105v6h5" fill="none" stroke="#999" stroke-width="0.5" stroke-dasharray="1 0.7"/><path d="M445.8 108h2.4l.8 1.3h-4z M444.8 109.8h4.4l.8 1.4h-6z M443.8 111.7h6.4l.8 1.5h-8z" fill="#3a3a3a"/></svg>
<div class="t" style="left:432.5px;top:98.66px;font-size:7.52px;color:#333;transform:scaleX(0.758);transform-origin:0 0">Study_Case</div>
<div class="t" style="left:454px;top:108.08px;font-size:8.18px;color:#555;transform:scaleX(0.758);transform-origin:0 0">3Dblox</div>
<div class="a" style="left:640px;top:73px;width:140px;height:55px;border-right:1px solid #777;border-bottom:1px solid #888;box-shadow:1px 1px 0 #ddd"></div>
<div class="t" style="left:646px;top:79.78px;font-size:8.18px;color:#444;transform:scaleX(0.758);transform-origin:0 0">Preview perspective:</div>
<div class="a" style="left:737px;top:77.5px;width:17.5px;height:10.0px;background:#fff;border:0.8px solid #7fb4c4;border-radius:1px"></div>
<div class="t" style="left:737px;width:17.5px;text-align:center;top:79.61px;font-size:7.92px;color:#1f4f63;transform:scaleX(0.758);transform-origin:50% 0">Back</div>
<div class="a" style="left:721px;top:90.5px;width:13.5px;height:10.0px;background:#fff;border:0.8px solid #7fb4c4;border-radius:1px"></div>
<div class="t" style="left:721px;width:13.5px;text-align:center;top:92.61px;font-size:7.92px;color:#1f4f63;transform:scaleX(0.758);transform-origin:50% 0">Left</div>
<div class="a" style="left:737.5px;top:90.5px;width:17.0px;height:10.0px;background:#fff;border:0.8px solid #7fb4c4;border-radius:1px"></div>
<div class="t" style="left:737.5px;width:17.0px;text-align:center;top:92.61px;font-size:7.92px;color:#1f4f63;transform:scaleX(0.758);transform-origin:50% 0">Top</div>
<div class="a" style="left:758px;top:90.5px;width:17px;height:10.0px;background:#fff;border:0.8px solid #7fb4c4;border-radius:1px"></div>
<div class="t" style="left:758px;width:17px;text-align:center;top:92.61px;font-size:7.92px;color:#1f4f63;transform:scaleX(0.758);transform-origin:50% 0">Right</div>
<div class="a" style="left:737.5px;top:103.5px;width:17.0px;height:10.0px;background:#e8e8e8;border:0.8px solid #c0c0c0;border-radius:1px"></div>
<div class="t" style="left:737.5px;width:17.0px;text-align:center;top:105.61px;font-size:7.92px;color:#a0a0a0;transform:scaleX(0.758);transform-origin:50% 0">Front</div>
<div class="a" style="left:646px;top:106px;width:6px;height:6px;background:#1f6f8f;border-radius:1px"></div>
<div class="a" style="left:646px;top:117px;width:6px;height:6px;background:#1f6f8f;border-radius:1px"></div>
<svg style="left:0;top:0" width="800" height="370" viewBox="0 0 800 370"><path d="M647.2 109l1.5 1.6 2.3-3 M647.2 120l1.5 1.6 2.3-3" fill="none" stroke="#fff" stroke-width="0.8"/></svg>
<div class="t" style="left:653px;top:106.31px;font-size:7.92px;color:#333;transform:scaleX(0.758);transform-origin:0 0">Z-axis x</div>
<div class="t" style="left:653px;top:117.31px;font-size:7.92px;color:#333;transform:scaleX(0.758);transform-origin:0 0">show embeded compo</div>
<div class="a" style="left:677px;top:105px;width:26px;height:9px;border:0.7px solid #bbb;background:#fff"></div>
<div class="a" style="left:678px;top:106px;width:8px;height:7px;background:#c4c4c4"></div>
<div class="t" style="left:678.5px;top:106.81px;font-size:7.92px;color:#222;transform:scaleX(0.758);transform-origin:0 0">10</div>
<svg style="left:0;top:0" width="800" height="370" viewBox="0 0 800 370"><path d="M698.5 108l1.2-1.2 1.2 1.2 M698.5 111l1.2 1.2 1.2-1.2" fill="none" stroke="#999" stroke-width="0.5"/></svg>
<div class="a" style="left:640.5px;top:131.5px;width:142.5px;height:207px;border-left:1px solid #888;border-top:1px solid #999;border-right:1px solid #ddd"></div>
<svg style="left:0;top:0" width="800" height="370" viewBox="0 0 800 370"><rect x="652" y="230.5" width="29.5" height="17.8" fill="#596f8e" stroke="#333" stroke-width="0.5"/><rect x="681.5" y="230.5" width="30.5" height="17.8" fill="#d8505e" stroke="#333" stroke-width="0.5"/><rect x="712" y="230.5" width="31" height="17.8" fill="#8fee8c" stroke="#333" stroke-width="0.5"/><rect x="743" y="230.5" width="29" height="17.8" fill="#6a92de" stroke="#333" stroke-width="0.5"/><rect x="650" y="248" width="125" height="1.6" fill="#2d7a55"/><path d="M663 251.5h98.5" stroke="#2a2a2a" stroke-width="2.2" stroke-dasharray="1.6 0.5 0.8 0.4"/><path d="M650 252.8h125" stroke="#888" stroke-width="0.5"/></svg>
<div class="t" style="left:421px;top:224.34px;font-size:7.66px;color:#444;transform:scaleX(0.758);transform-origin:0 0">Parts:</div>
<div class="a" style="left:421px;top:234px;width:91px;height:105px;border:0.7px solid #ddd;background:#fff"></div>
<div class="gh" style="left:421px;top:234px;width:91px;height:13.5px;background:#c4c4c4"></div>
<div class="a" style="left:471.5px;top:234px;width:0.8px;height:13.5px;background:#888"></div>
<div class="t" style="left:424px;top:238.31px;font-size:7.92px;color:#333;transform:scaleX(0.758);transform-origin:0 0">Ref des</div>
<svg style="left:0;top:0" width="800" height="370" viewBox="0 0 800 370"><g fill="none" stroke="#8a8a8a" stroke-width="0.55"><path d="M460.5 236.5v4 M459.3 241l1.2-1 1.2 1 M459.3 242.5h2.4l-2.4 3h2.4 M464 237v8 M463 244l1 1 1-1"/></g></svg>
<div class="t" style="left:474px;top:238.31px;font-size:7.92px;color:#333;transform:scaleX(0.758);transform-origin:0 0">Group</div>
<div class="a" style="left:421.5px;top:334px;width:90px;height:5px;background:#ececec"></div>
<div class="a" style="left:428px;top:334px;width:39px;height:5px;background:#5b8796"></div>
<div class="t" style="left:529px;top:224.34px;font-size:7.66px;color:#444;transform:scaleX(0.758);transform-origin:0 0">Stack:</div>
<div class="a" style="left:530px;top:234px;width:91px;height:105px;border:0.7px solid #ddd;background:#fff"></div>
<div class="gh" style="left:530px;top:234px;width:85px;height:13.5px;background:#c4c4c4"></div>
<div class="a" style="left:580px;top:234px;width:0.8px;height:13.5px;background:#888"></div>
<div class="t" style="left:532px;top:238.31px;font-size:7.92px;color:#333;transform:scaleX(0.758);transform-origin:0 0">Level</div>
<div class="t" style="left:583px;top:238.31px;font-size:7.92px;color:#333;transform:scaleX(0.758);transform-origin:0 0">Ref des</div>
<svg style="left:0;top:0" width="800" height="370" viewBox="0 0 800 370"><g fill="none" stroke="#8a8a8a" stroke-width="0.55"><path d="M569 236.5v4 M567.8 241l1.2-1 1.2 1 M567.8 242.5h2.4l-2.4 3h2.4 M572.5 237v8 M571.5 244l1 1 1-1"/></g></svg>
<div class="a" style="left:615px;top:234px;width:6px;height:100px;background:#f0f0f0"></div>
<div class="a" style="left:615.5px;top:241px;width:5px;height:11px;background:#3f6f80"></div>
<svg style="left:0;top:0" width="800" height="370" viewBox="0 0 800 370"><g stroke="#e4e4e4" stroke-width="0.6"><path d="M530 260.85h85"/><path d="M530 274.2h85"/><path d="M530 287.55h85"/><path d="M530 300.9h85"/><path d="M530 314.25h85"/><path d="M530 327.6h85"/><path d="M580.5 247.5v86.5"/></g></svg>
<div class="t" style="left:553.5px;top:252.24px;font-size:7.66px;color:#333;transform:scaleX(0.758);transform-origin:0 0">0</div>
<div class="t" style="left:583px;top:252.24px;font-size:7.66px;color:#333;transform:scaleX(0.758);transform-origin:0 0">bRDL_1</div>
<div class="t" style="left:553.5px;top:265.59px;font-size:7.66px;color:#333;transform:scaleX(0.758);transform-origin:0 0">1</div>
<div class="t" style="left:583px;top:265.59px;font-size:7.66px;color:#333;transform:scaleX(0.758);transform-origin:0 0">IPD_13</div>
<div class="t" style="left:553.5px;top:278.94px;font-size:7.66px;color:#333;transform:scaleX(0.758);transform-origin:0 0">1</div>
<div class="t" style="left:583px;top:278.94px;font-size:7.66px;color:#333;transform:scaleX(0.758);transform-origin:0 0">IPD_12</div>
<div class="t" style="left:553.5px;top:292.29px;font-size:7.66px;color:#333;transform:scaleX(0.758);transform-origin:0 0">1</div>
<div class="t" style="left:583px;top:292.29px;font-size:7.66px;color:#333;transform:scaleX(0.758);transform-origin:0 0">IPD_11</div>
<div class="t" style="left:553.5px;top:305.64px;font-size:7.66px;color:#333;transform:scaleX(0.758);transform-origin:0 0">1</div>
<div class="t" style="left:583px;top:305.64px;font-size:7.66px;color:#333;transform:scaleX(0.758);transform-origin:0 0">IPD_10</div>
<div class="t" style="left:553.5px;top:318.99px;font-size:7.66px;color:#333;transform:scaleX(0.758);transform-origin:0 0">1</div>
<div class="t" style="left:583px;top:318.99px;font-size:7.66px;color:#333;transform:scaleX(0.758);transform-origin:0 0">IPD_8</div>
<div class="t" style="left:553.5px;top:332.34px;font-size:7.66px;color:#333;transform:scaleX(0.758);transform-origin:0 0">1</div>
<div class="t" style="left:583px;top:332.34px;font-size:7.66px;color:#333;transform:scaleX(0.758);transform-origin:0 0">IPD_6</div>
<div class="a" style="left:530.5px;top:339px;width:84.5px;height:4px;background:#fff"></div>
<div class="a" style="left:530.5px;top:334px;width:84.5px;height:5px;background:#ececec"></div>
<div class="a" style="left:537px;top:334px;width:35px;height:5px;background:#5b8796"></div>
<div class="a" style="left:615px;top:334px;width:6px;height:5px;background:#fff"></div>
<svg style="left:0;top:0" width="800" height="370" viewBox="0 0 800 370"><g fill="none" stroke="#888" stroke-width="0.55"><path d="M616.5 237l1.5-1.5 1.5 1.5 M616.5 329.5l1.5 1.5 1.5-1.5 M424.5 334.8l-1 1.6 1 1.6 M509 334.8l1 1.6-1 1.6 M533 334.8l-1 1.6 1 1.6 M611.5 334.8l1 1.6-1 1.6"/></g></svg>
<div class="a" style="left:515px;top:265px;width:12px;height:11px;border:0.7px solid #bbb;background:#f0f0f0"></div>
<div class="a" style="left:516px;top:280px;width:11.5px;height:10.5px;border:0.8px solid #7fb4c4;background:#fff"></div>
<div class="a" style="left:623px;top:265px;width:11.5px;height:11px;border:0.8px solid #7fb4c4;background:#fff"></div>
<div class="a" style="left:623px;top:280px;width:11.5px;height:11px;border:0.8px solid #7fb4c4;background:#fff"></div>
<svg style="left:0;top:0" width="800" height="370" viewBox="0 0 800 370"><g fill="none" stroke-width="0.6"><path d="M517.5 267.5v6 M519 267.5v6 M520.5 267.5l4.5 3-4.5 3z" stroke="#aaa"/><path d="M525 282.5v6 M523.5 282.5v6 M522 282.5l-4.5 3 4.5 3z" stroke="#444"/><path d="M628.8 266.5l-4 4h8z M625.5 272h6.5 M625.5 273.5h6.5" stroke="#555"/><path d="M628.8 289.5l-4-4h8z M625.5 282.5h6.5 M625.5 284h6.5" stroke="#555"/></g></svg>
<div class="a" style="left:421px;top:347px;width:6px;height:6px;border:0.8px solid #8a8a8a;border-radius:1.5px;background:#fff"></div>
<div class="t" style="left:428px;top:347.31px;font-size:7.92px;color:#333;transform:scaleX(0.758);transform-origin:0 0">Show external components</div>
<div class="a" style="left:752px;top:345px;width:28px;height:10px;background:#fff;border:0.8px solid #6a9fb0;border-radius:1px"></div>
<div class="t" style="left:752px;width:28px;text-align:center;top:347.10px;font-size:8.05px;color:#1f4f63;transform:scaleX(0.758);transform-origin:50% 0">Close</div>
<svg style="left:0;top:0" width="800" height="370" viewBox="0 0 800 370"><path d="M784 358l-4 4h4z" fill="#8a8a8a"/></svg>
</body></html>
